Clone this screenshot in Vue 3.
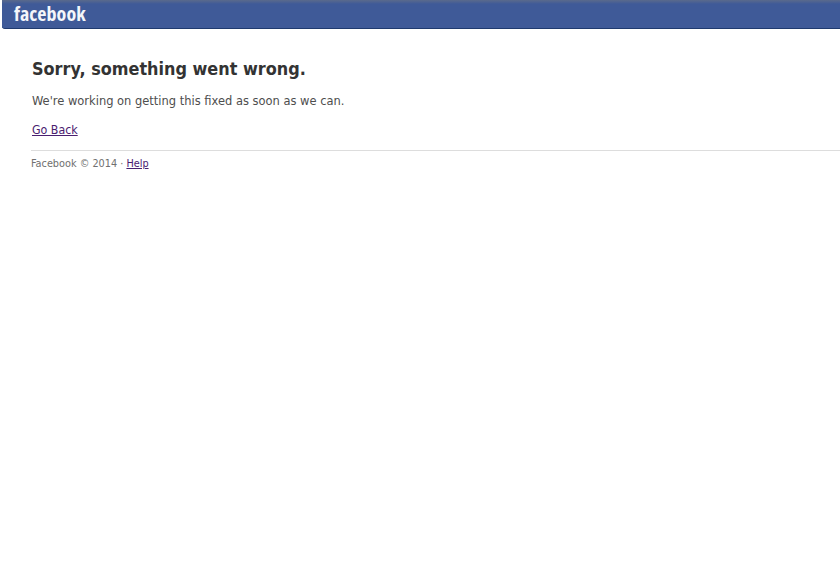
<template>
  <div class="page">
    <header class="bar"><span class="logo">facebook</span></header>
    <main class="content">
      <h1 class="title">Sorry, something went wrong.</h1>
      <p class="msg">We're working on getting this fixed as soon as we can.</p>
      <p class="back"><a href="#">Go Back</a></p>
      <footer class="foot">
        <span>Facebook © 2014 · </span><a href="#">Help</a>
      </footer>
    </main>
  </div>
</template>

<script setup>
</script>

<style>
html, body { margin: 0; background: #fff; }
</style>

<style scoped>
.page {
  width: 840px;
  height: 580px;
  overflow: hidden;
  background: #fff;
  font-family: "DejaVu Sans", sans-serif;
  font-stretch: condensed;
}
.bar {
  box-sizing: border-box;
  height: 29px;
  margin-left: 2px;
  padding-left: 12px;
  background: #3b5998;
  background-image: linear-gradient(#5a6a8c, #3f5a98 4px);
  border-bottom: 1px solid #1f3a6e;
  border-radius: 0 0 0 3px;
  display: flex;
  align-items: center;
}
.logo {
  font-family: "Open Sans", sans-serif;
  font-weight: 700;
  font-stretch: condensed;
  font-size: 20px;
  letter-spacing: 0.05px;
  color: #f4f6fa;
  line-height: 28px;
}
.content { padding: 29px 0 0 32px; }
.title {
  margin: 0;
  font-size: 17.85px;
  line-height: 22px;
  font-weight: 700;
  color: #333;
}
.msg {
  margin: 13px 0 0;
  font-size: 12.75px;
  line-height: 16px;
  color: #4e4e4e;
}
.back {
  margin: 13px 0 0;
  font-size: 12.3px;
  line-height: 16px;
}
a { color: #4a2070; text-decoration: underline; }
.foot {
  margin-top: 12px;
  margin-left: -1px;
  padding-top: 6px;
  border-top: 1px solid #ddd;
  font-size: 10.8px;
  line-height: 13px;
  color: #707070;
}
</style>
